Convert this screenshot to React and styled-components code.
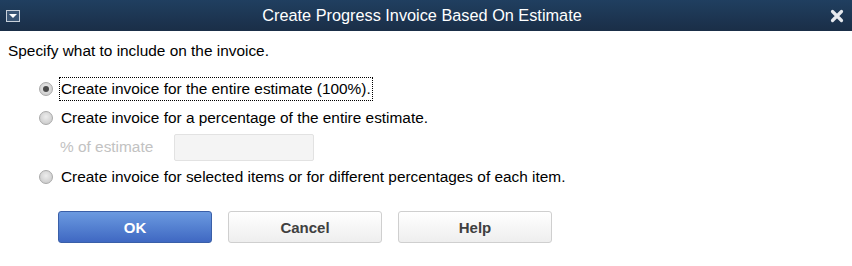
import React from "react";
import styled, { createGlobalStyle } from "styled-components";

const Global = createGlobalStyle`
  html, body { margin: 0; padding: 0; background: #fff; }
  body { font-family: "Liberation Sans", Arial, sans-serif; }
`;

const Dialog = styled.div`
  width: 852px;
  height: 266px;
  background: #fff;
  display: flex;
  flex-direction: column;
`;

const TitleBar = styled.div`
  height: 31px;
  background: linear-gradient(#203f60, #1a2e47);
  display: flex;
  align-items: center;
  justify-content: space-between;
  padding: 0 8px 0 6px;
  color: #fff;
`;

const Title = styled.div`
  flex: 1;
  text-align: center;
  font-size: 16.3px;
  color: #fff;
  padding-right: 6px;
`;

const MenuIcon = styled.div`
  width: 12px;
  height: 10px;
  border: 1px solid #c8d0da;
  background: #3a5574;
  display: flex;
  align-items: center;
  justify-content: center;
  &::after {
    content: "";
    border-left: 4px solid transparent;
    border-right: 4px solid transparent;
    border-top: 4px solid #fff;
  }
`;

const Body = styled.div`
  padding: 11px 8px 0 8px;
  display: flex;
  flex-direction: column;
`;

const Intro = styled.div`
  font-size: 15.4px;
  color: #000;
  line-height: 18px;
`;

const Options = styled.div`
  display: flex;
  flex-direction: column;
  padding-left: 31px;
  margin-top: 14px;
`;

const OptionRow = styled.div`
  display: flex;
  align-items: center;
  height: ${(p) => p.h || 29}px;
`;

const Radio = styled.span`
  width: 14px;
  height: 14px;
  border-radius: 50%;
  box-sizing: border-box;
  border: 1px solid #a9a9a9;
  background: radial-gradient(circle at 50% 40%, #ededed, #c4c4c4);
  display: flex;
  align-items: center;
  justify-content: center;
  margin-right: 8px;
  flex-shrink: 0;
  &::after {
    content: "";
    display: ${(p) => (p.checked ? "block" : "none")};
    width: 6px;
    height: 6px;
    border-radius: 50%;
    background: #4a4a4a;
  }
`;

const Label = styled.span`
  font-size: 15.4px;
  color: #000;
  line-height: 18px;
  padding: 2px 1px;
  margin-left: -2px;
  border: 1px dotted ${(p) => (p.focused ? "#000" : "transparent")};
`;

const PctRow = styled.div`
  display: flex;
  align-items: center;
  height: 30px;
  padding-left: 21px;
`;

const PctLabel = styled.span`
  font-size: 15.4px;
  color: #c2c2c2;
  width: 114px;
`;

const PctInput = styled.div`
  width: 140px;
  height: 27px;
  box-sizing: border-box;
  border: 1px solid #e2e2e2;
  border-radius: 2px;
  background: #f4f4f4;
`;

const Buttons = styled.div`
  display: flex;
  gap: 16px;
  padding-left: 50px;
  margin-top: 20px;
`;

const Button = styled.button`
  width: 154px;
  height: 32px;
  box-sizing: border-box;
  border-radius: 3px;
  font-family: "Liberation Sans", Arial, sans-serif;
  font-weight: bold;
  font-size: 15px;
  cursor: pointer;
  ${(p) =>
    p.primary
      ? `
    background: linear-gradient(#6b9ae0, #3f68c2);
    border: 1px solid #3a5fa8;
    color: #fff;
  `
      : `
    background: linear-gradient(#ffffff, #eeeeee);
    border: 1px solid #cfcfcf;
    color: #404040;
  `}
`;

export default function App() {
  return (
    <>
      <Global />
      <Dialog>
        <TitleBar>
          <MenuIcon />
          <Title>Create Progress Invoice Based On Estimate</Title>
          <svg width="14" height="14" viewBox="0 0 14 14">
            <path
              d="M2.5 2.5 L11.5 11.5 M11.5 2.5 L2.5 11.5"
              stroke="#e6e9ee"
              strokeWidth="3.2"
              strokeLinecap="round"
            />
          </svg>
        </TitleBar>
        <Body>
          <Intro>Specify what to include on the invoice.</Intro>
          <Options>
            <OptionRow h={29}>
              <Radio checked />
              <Label focused>Create invoice for the entire estimate (100%).</Label>
            </OptionRow>
            <OptionRow h={29}>
              <Radio />
              <Label>Create invoice for a percentage of the entire estimate.</Label>
            </OptionRow>
            <PctRow>
              <PctLabel>% of estimate</PctLabel>
              <PctInput />
            </PctRow>
            <OptionRow h={29}>
              <Radio />
              <Label>Create invoice for selected items or for different percentages of each item.</Label>
            </OptionRow>
          </Options>
          <Buttons>
            <Button primary>OK</Button>
            <Button>Cancel</Button>
            <Button>Help</Button>
          </Buttons>
        </Body>
      </Dialog>
    </>
  );
}
